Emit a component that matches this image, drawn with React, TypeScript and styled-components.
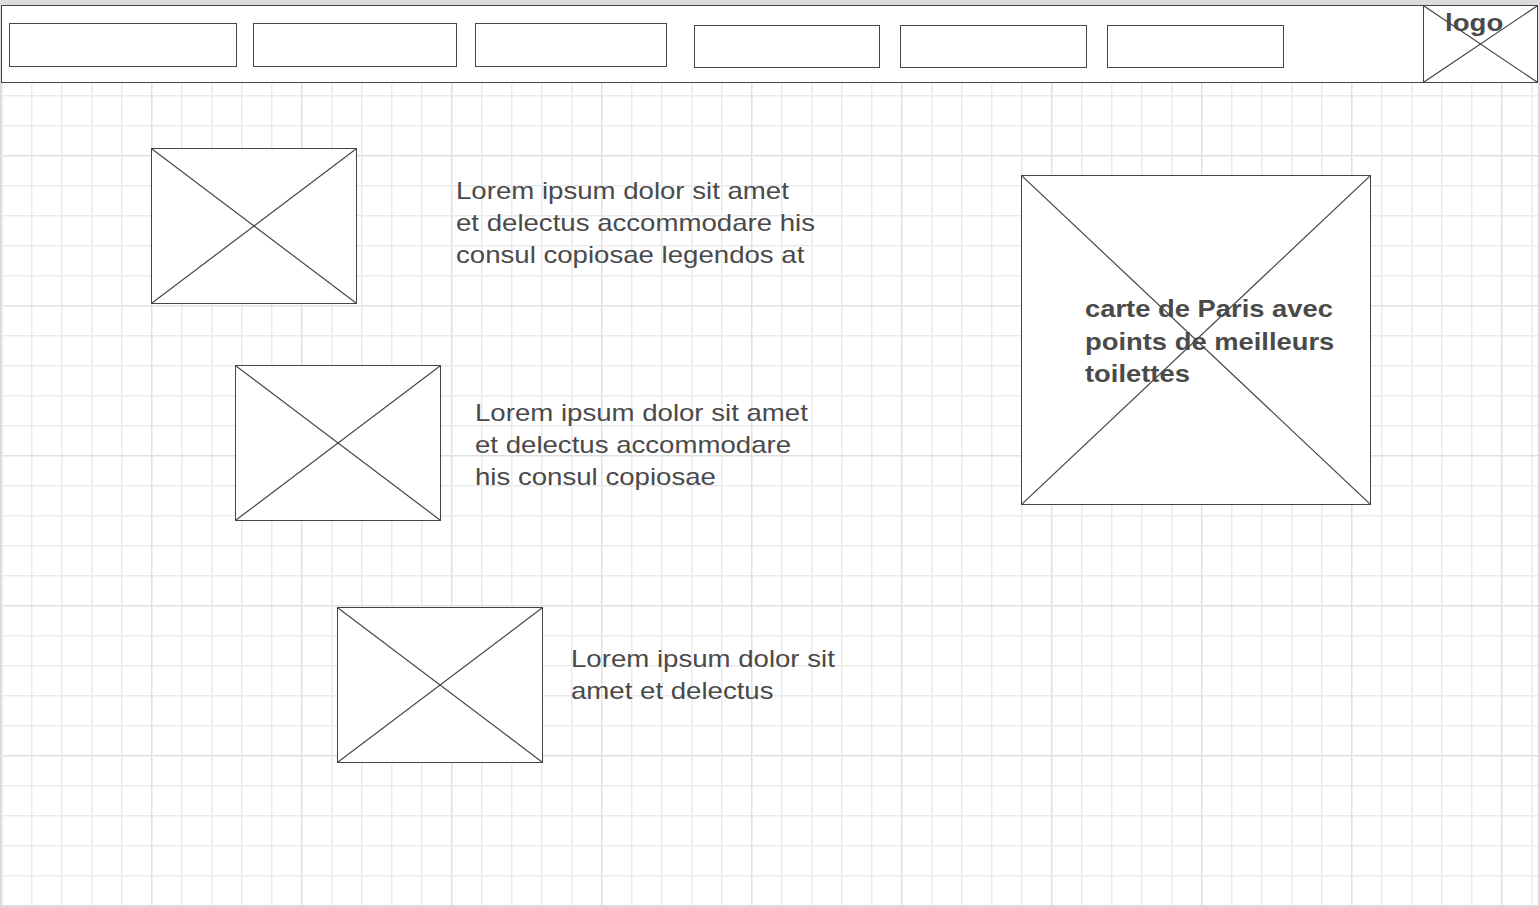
import React from "react";
import styled, { createGlobalStyle } from "styled-components";

const GlobalStyle = createGlobalStyle`
  html, body {
    margin: 0;
    padding: 0;
    background: #dcdcdc;
    font-family: "Liberation Sans", Arial, sans-serif;
  }
`;

const INK = "#444444";
const TEXT = "#4a4a4a";

const Page = styled.div`
  width: 1539px;
  height: 907px;
  padding: 5px 0 0 1px;
  box-sizing: border-box;
  overflow: hidden;
`;

const Canvas = styled.div`
  width: 1537px;
  height: 900px;
  display: flex;
  flex-direction: column;
  background-color: #ffffff;
  background-image:
    linear-gradient(to right, #e0e0e0 1px, #efefef 1px, #efefef 2px, transparent 2px),
    linear-gradient(to bottom, #e0e0e0 1px, #efefef 1px, #efefef 2px, transparent 2px),
    linear-gradient(to right, #eaeaea 1px, #f5f5f5 1px, #f5f5f5 2px, transparent 2px),
    linear-gradient(to bottom, #eaeaea 1px, #f5f5f5 1px, #f5f5f5 2px, transparent 2px);
  background-size: 150px 150px, 150px 150px, 30px 30px, 30px 30px;
`;

const Header = styled.header`
  height: 78px;
  box-sizing: border-box;
  border: 1px solid ${INK};
  background: #ffffff;
  display: flex;
  align-items: flex-start;
  flex: none;
`;

const NavBox = styled.div<{ $w: number; $h: number; $ml: number; $mt: number }>`
  flex: none;
  width: ${(p) => p.$w}px;
  height: ${(p) => p.$h}px;
  margin-left: ${(p) => p.$ml}px;
  margin-top: ${(p) => p.$mt}px;
  box-sizing: border-box;
  border: 1px solid ${INK};
  background: #ffffff;
`;

const Logo = styled.div`
  margin-left: auto;
  align-self: stretch;
  width: 114px;
  box-sizing: border-box;
  border-left: 1px solid ${INK};
  position: relative;
  padding: 5px 0 0 21px;
`;

const LogoText = styled.span`
  position: relative;
  display: block;
  font-size: 24px;
  line-height: 24px;
  font-weight: 700;
  color: ${TEXT};
  transform: scaleX(1.15);
  transform-origin: left center;
`;

const Cross = styled.svg`
  position: absolute;
  inset: 0;
  width: 100%;
  height: 100%;
  pointer-events: none;
`;

const Body = styled.main`
  display: flex;
  align-items: flex-start;
  flex: 1;
`;

const LeftColumn = styled.div`
  width: 900px;
  flex: none;
  display: flex;
  flex-direction: column;
`;

const Row = styled.section<{ $ml: number; $mt: number }>`
  display: flex;
  align-items: flex-start;
  margin-left: ${(p) => p.$ml}px;
  margin-top: ${(p) => p.$mt}px;
`;

const Placeholder = styled.div<{ $w: number; $h: number }>`
  position: relative;
  flex: none;
  width: ${(p) => p.$w}px;
  height: ${(p) => p.$h}px;
  box-sizing: border-box;
  border: 1px solid ${INK};
  background: #ffffff;
`;

const Copy = styled.p<{ $ml: number; $mt: number }>`
  margin: ${(p) => p.$mt}px 0 0 ${(p) => p.$ml}px;
  font-size: 24px;
  line-height: 32px;
  color: ${TEXT};
  white-space: nowrap;
  transform: scaleX(1.15);
  transform-origin: left top;
`;

const Line = styled.span`
  display: block;
`;

const MapBox = styled(Placeholder)`
  margin-left: 120px;
  margin-top: 92px;
  padding: 117px 0 0 63px;
`;

const MapLabel = styled.p`
  position: relative;
  margin: 0;
  font-size: 24px;
  line-height: 32.5px;
  font-weight: 700;
  color: ${TEXT};
  white-space: nowrap;
  transform: scaleX(1.14);
  transform-origin: left top;
`;

const X = () => (
  <Cross viewBox="0 0 100 100" preserveAspectRatio="none" aria-hidden="true">
    <line x1="0" y1="0" x2="100" y2="100" stroke={INK} strokeWidth="1.2" vectorEffect="non-scaling-stroke" />
    <line x1="100" y1="0" x2="0" y2="100" stroke={INK} strokeWidth="1.2" vectorEffect="non-scaling-stroke" />
  </Cross>
);

const navItems = [
  { w: 228, h: 44, ml: 7, mt: 17 },
  { w: 204, h: 44, ml: 16, mt: 17 },
  { w: 192, h: 44, ml: 18, mt: 17 },
  { w: 186, h: 43, ml: 27, mt: 19 },
  { w: 187, h: 43, ml: 20, mt: 19 },
  { w: 177, h: 43, ml: 20, mt: 19 },
];

const rows = [
  {
    ml: 150,
    mt: 65,
    textMl: 99,
    textMt: 27,
    lines: ["Lorem ipsum dolor sit amet", "et delectus accommodare his", "consul copiosae legendos at"],
  },
  {
    ml: 234,
    mt: 61,
    textMl: 34,
    textMt: 32,
    lines: ["Lorem ipsum dolor sit amet", "et delectus accommodare", "his consul copiosae"],
  },
  {
    ml: 336,
    mt: 86,
    textMl: 28,
    textMt: 36,
    lines: ["Lorem ipsum dolor sit", "amet et delectus"],
  },
];

export default function App() {
  return (
    <>
      <GlobalStyle />
      <Page>
        <Canvas>
          <Header>
            {navItems.map((n, i) => (
              <NavBox key={i} $w={n.w} $h={n.h} $ml={n.ml} $mt={n.mt} />
            ))}
            <Logo>
              <X />
              <LogoText>logo</LogoText>
            </Logo>
          </Header>
          <Body>
            <LeftColumn>
              {rows.map((r, i) => (
                <Row key={i} $ml={r.ml} $mt={r.mt}>
                  <Placeholder $w={206} $h={156}>
                    <X />
                  </Placeholder>
                  <Copy $ml={r.textMl} $mt={r.textMt}>
                    {r.lines.map((l, j) => (
                      <Line key={j}>{l}</Line>
                    ))}
                  </Copy>
                </Row>
              ))}
            </LeftColumn>
            <MapBox $w={350} $h={330}>
              <X />
              <MapLabel>
                <Line>carte de Paris avec</Line>
                <Line>points de meilleurs</Line>
                <Line>toilettes</Line>
              </MapLabel>
            </MapBox>
          </Body>
        </Canvas>
      </Page>
    </>
  );
}
